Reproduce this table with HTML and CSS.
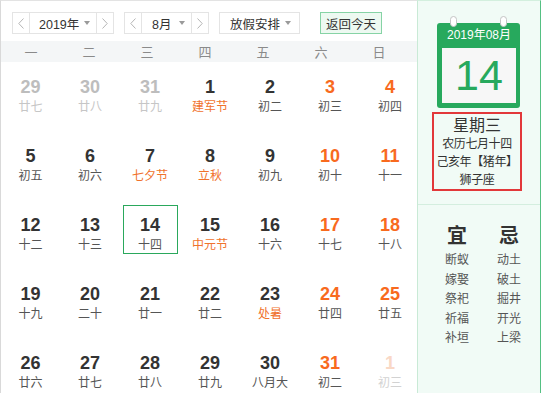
FILE: index.html
```html
<!DOCTYPE html>
<html lang="zh-CN">
<head>
<meta charset="utf-8">
<title>万年历</title>
<link rel="stylesheet" href="styles.css">
</head>
<body>
<div class="widget">
  <div class="main">
    <div class="toolbar">
      <div class="sel sel-year">
        <span class="nav prev"><svg width="6" height="11" viewBox="0 0 6 11"><polyline points="5.5,0.5 0.8,5.5 5.5,10.5" fill="none" stroke="#b5b5b5" stroke-width="1"/></svg></span>
        <span class="val"><span>2019年</span><i class="caret"></i></span>
        <span class="nav next"><svg width="6" height="11" viewBox="0 0 6 11"><polyline points="0.5,0.5 5.2,5.5 0.5,10.5" fill="none" stroke="#b5b5b5" stroke-width="1"/></svg></span>
      </div>
      <div class="sel sel-month">
        <span class="nav prev"><svg width="6" height="11" viewBox="0 0 6 11"><polyline points="5.5,0.5 0.8,5.5 5.5,10.5" fill="none" stroke="#b5b5b5" stroke-width="1"/></svg></span>
        <span class="val"><span>8月</span><i class="caret"></i></span>
        <span class="nav next"><svg width="6" height="11" viewBox="0 0 6 11"><polyline points="0.5,0.5 5.2,5.5 0.5,10.5" fill="none" stroke="#b5b5b5" stroke-width="1"/></svg></span>
      </div>
      <div class="sel sel-holiday">
        <span class="val"><span>放假安排</span><i class="caret"></i></span>
      </div>
      <button class="today-btn">返回今天</button>
    </div>
    <div class="weekhead">
      <span>一</span><span>二</span><span>三</span><span>四</span><span>五</span><span>六</span><span>日</span>
    </div>
    <div class="days">
      <div class="day other"><b>29</b><span>廿七</span></div>
      <div class="day other"><b>30</b><span>廿八</span></div>
      <div class="day other"><b>31</b><span>廿九</span></div>
      <div class="day fest"><b>1</b><span>建军节</span></div>
      <div class="day"><b>2</b><span>初二</span></div>
      <div class="day we"><b>3</b><span>初三</span></div>
      <div class="day we"><b>4</b><span>初四</span></div>

      <div class="day"><b>5</b><span>初五</span></div>
      <div class="day"><b>6</b><span>初六</span></div>
      <div class="day fest"><b>7</b><span>七夕节</span></div>
      <div class="day fest"><b>8</b><span>立秋</span></div>
      <div class="day"><b>9</b><span>初九</span></div>
      <div class="day we"><b>10</b><span>初十</span></div>
      <div class="day we"><b>11</b><span>十一</span></div>

      <div class="day"><b>12</b><span>十二</span></div>
      <div class="day"><b>13</b><span>十三</span></div>
      <div class="day today"><b>14</b><span>十四</span></div>
      <div class="day fest"><b>15</b><span>中元节</span></div>
      <div class="day"><b>16</b><span>十六</span></div>
      <div class="day we"><b>17</b><span>十七</span></div>
      <div class="day we"><b>18</b><span>十八</span></div>

      <div class="day"><b>19</b><span>十九</span></div>
      <div class="day"><b>20</b><span>二十</span></div>
      <div class="day"><b>21</b><span>廿一</span></div>
      <div class="day"><b>22</b><span>廿二</span></div>
      <div class="day fest"><b>23</b><span>处暑</span></div>
      <div class="day we"><b>24</b><span>廿四</span></div>
      <div class="day we"><b>25</b><span>廿五</span></div>

      <div class="day"><b>26</b><span>廿六</span></div>
      <div class="day"><b>27</b><span>廿七</span></div>
      <div class="day"><b>28</b><span>廿八</span></div>
      <div class="day"><b>29</b><span>廿九</span></div>
      <div class="day"><b>30</b><span>八月大</span></div>
      <div class="day we"><b>31</b><span>初二</span></div>
      <div class="day next"><b>1</b><span>初三</span></div>
    </div>
  </div>
  <div class="panel">
    <div class="panel-top">
      <div class="cal-icon">
        <i class="ring ring-l"></i><i class="ring ring-r"></i>
        <div class="cal-head">2019年08月</div>
        <div class="cal-body">14</div>
      </div>
      <div class="info">
        <div class="info-week">星期三</div>
        <div class="info-line">农历七月十四</div>
        <div class="info-line">己亥年【猪年】</div>
        <div class="info-line">狮子座</div>
      </div>
    </div>
    <div class="panel-bottom">
      <div class="yj">
        <div class="yj-title">宜</div>
        <div>断蚁</div><div>嫁娶</div><div>祭祀</div><div>祈福</div><div>补垣</div>
      </div>
      <div class="yj">
        <div class="yj-title">忌</div>
        <div>动土</div><div>破土</div><div>掘井</div><div>开光</div><div>上梁</div>
      </div>
    </div>
  </div>
</div>
</body>
</html>
```

FILE: styles.css
```css
html, body {
  margin: 0;
  padding: 0;
  background: #fff;
  overflow: hidden;
}
body {
  font-family: "Liberation Sans", Arial, "Noto Sans CJK SC", sans-serif;
  color: #333;
}
.widget {
  display: flex;
  width: 541px;
  height: 393px;
}
.main {
  width: 417px;
  box-sizing: border-box;
  border-top: 1px solid #e3e3e3;
  border-left: 1px solid #d9d9d9;
}
.toolbar {
  display: flex;
  align-items: center;
  height: 22px;
  margin-top: 11px;
  padding-left: 11px;
  font-size: 12.5px;
}
.sel {
  display: flex;
  height: 22px;
  box-sizing: border-box;
  border: 1px solid #e4e4e4;
  background: #fff;
}
.sel .nav {
  width: 16px;
  display: flex;
  align-items: center;
  justify-content: center;
}
.sel .prev { border-right: 1px solid #e4e4e4; }
.sel .next { border-left: 1px solid #e4e4e4; }
.sel .val {
  flex: 1;
  display: flex;
  align-items: center;
  justify-content: space-between;
  padding: 0 6px 0 9px;
}
.caret {
  width: 0;
  height: 0;
  border-left: 3.5px solid transparent;
  border-right: 3.5px solid transparent;
  border-top: 4px solid #9a9a9a;
}
.sel-year { width: 102px; }
.sel-month { width: 85px; margin-left: 10px; }
.sel-month .val { padding-left: 10px; }
.sel-holiday { width: 81px; margin-left: 10px; }
.sel-holiday .val { padding: 0 8px 0 10px; }
.today-btn {
  margin-left: 20px;
  width: 62px;
  height: 22px;
  box-sizing: border-box;
  padding: 0;
  border: 1px solid #86d3a5;
  background: #edf9f1;
  color: #333;
  font-family: inherit;
  font-size: 12.5px;
}
.weekhead {
  display: grid;
  grid-template-columns: repeat(7, 58px);
  margin-top: 7px;
  height: 21px;
  padding-left: 1px;
  background: #f4f6f7;
  align-items: center;
  font-size: 13px;
  color: #8a8a8a;
  font-family: "Noto Sans CJK SC", sans-serif;
  line-height: 21px;
}
.weekhead span { text-align: center; }
.days {
  display: grid;
  grid-template-columns: 59px repeat(6, 60px);
  grid-auto-rows: 49px;
  row-gap: 20px;
  margin-top: 5px;
}
.day {
  width: 55px;
  justify-self: center;
  box-sizing: border-box;
  padding-top: 10px;
  text-align: center;
}
.day b {
  display: block;
  font-size: 18px;
  line-height: 20px;
  font-weight: bold;
  color: #333;
}
.day span {
  display: block;
  margin-top: 1px;
  font-size: 12px;
  line-height: 16px;
  color: #555;
  font-family: "Noto Sans CJK SC", sans-serif;
}
.day.we b { color: #f86a1e; }
.day.fest span { color: #f0722c; }
.day.other b { color: #bdbdbd; }
.day.other span { color: #c6c6c6; }
.day.next b { color: #f9d8c6; }
.day.next span { color: #d2d2d2; }
.day.today {
  border: 1px solid #2aa85c;
  padding-top: 9px;
}
.panel {
  width: 124px;
  box-sizing: border-box;
  border-top: 1px solid #d3efde;
  border-left: 1px solid #c9ead6;
  border-right: 1px solid #55c083;
  background: #f1fbf6;
  font-family: "Noto Sans CJK SC", sans-serif;
}
.panel-top {
  height: 204px;
  box-sizing: border-box;
  border-bottom: 1px solid #d4eedf;
  padding-top: 22px;
}
.cal-icon {
  position: relative;
  width: 83px;
  margin-left: 19px;
  background: #27a95d;
  border-radius: 3px;
  padding: 0 4px 5px 5px;
  box-sizing: border-box;
}
.ring {
  position: absolute;
  top: -7px;
  width: 7px;
  height: 11px;
  box-sizing: border-box;
  background: #fff;
  border: 1px solid #c4c4c4;
  border-radius: 4px;
}
.ring-l { left: 13px; }
.ring-r { left: 63px; }
.cal-head {
  height: 25px;
  line-height: 25px;
  text-align: center;
  color: #fff;
  font-size: 12px;
  font-family: "Liberation Sans", Arial, "Noto Sans CJK SC", sans-serif;
}
.cal-body {
  height: 55px;
  background: #f7f7f7;
  color: #27a95d;
  font-size: 43px;
  line-height: 55px;
  text-align: center;
  font-family: "Liberation Sans", Arial, sans-serif;
}
.info {
  width: 90px;
  height: 79px;
  margin: 4px 0 0 14px;
  box-sizing: border-box;
  border: 2px solid #e2383a;
  text-align: center;
  color: #333;
}
.info-week {
  font-size: 16px;
  line-height: 20px;
}
.info-line {
  font-size: 12px;
  line-height: 18px;
  white-space: nowrap;
  letter-spacing: -0.4px;
}
.panel-bottom {
  display: flex;
  gap: 12px;
  padding: 19px 0 0 19px;
}
.yj {
  width: 40px;
  text-align: center;
  font-size: 12px;
  line-height: 19.5px;
  color: #555;
}
.yj-title {
  font-size: 20px;
  font-weight: bold;
  line-height: 22px;
  color: #333;
  margin-bottom: 3px;
}
```
